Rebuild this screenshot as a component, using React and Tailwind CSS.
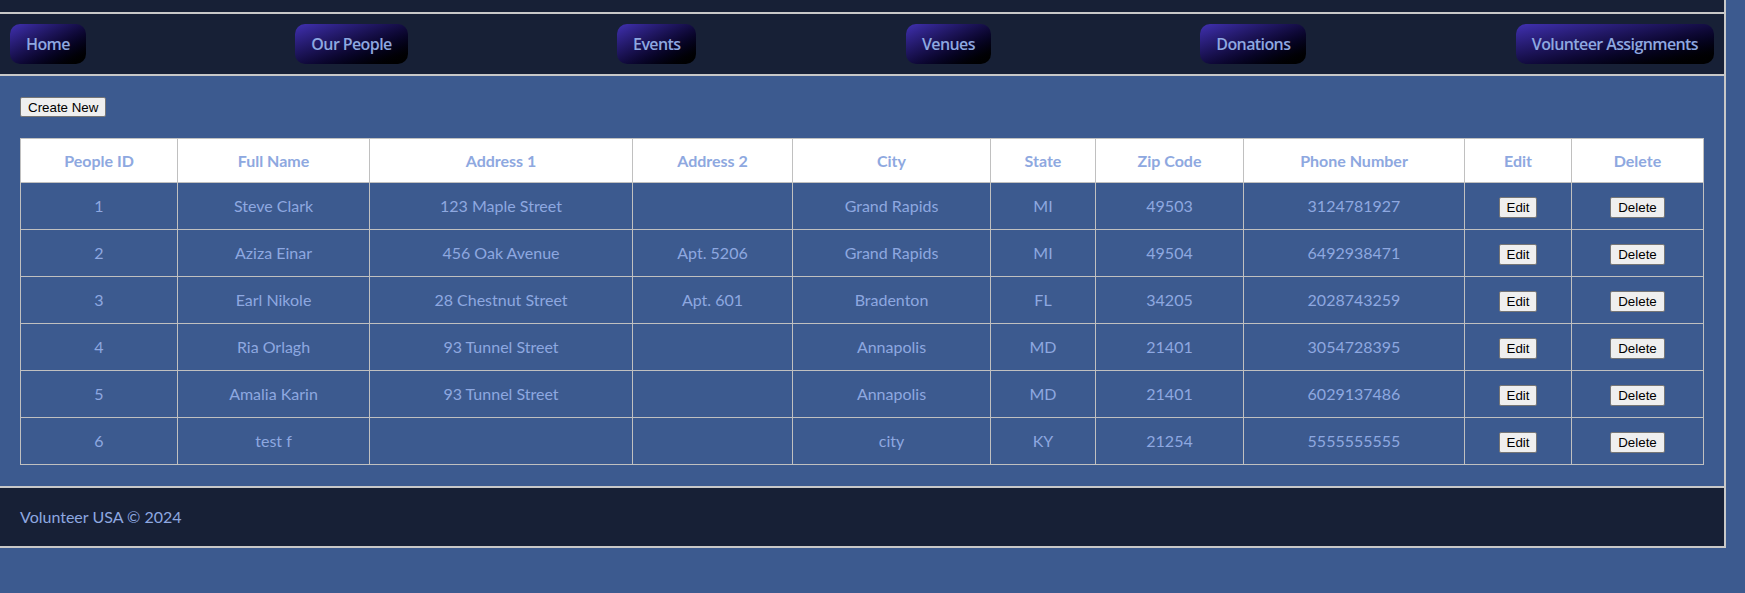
import React from "react";

const navItems = ["Home", "Our People", "Events", "Venues", "Donations", "Volunteer Assignments"];

const rows = [
  ["1", "Steve Clark", "123 Maple Street", "", "Grand Rapids", "MI", "49503", "3124781927"],
  ["2", "Aziza Einar", "456 Oak Avenue", "Apt. 5206", "Grand Rapids", "MI", "49504", "6492938471"],
  ["3", "Earl Nikole", "28 Chestnut Street", "Apt. 601", "Bradenton", "FL", "34205", "2028743259"],
  ["4", "Ria Orlagh", "93 Tunnel Street", "", "Annapolis", "MD", "21401", "3054728395"],
  ["5", "Amalia Karin", "93 Tunnel Street", "", "Annapolis", "MD", "21401", "6029137486"],
  ["6", "test f", "", "", "city", "KY", "21254", "5555555555"],
];

const headers = [
  ["People ID", "w-[157px]"],
  ["Full Name", "w-[192px]"],
  ["Address 1", "w-[263px]"],
  ["Address 2", "w-[160px]"],
  ["City", "w-[198px]"],
  ["State", "w-[105px]"],
  ["Zip Code", "w-[148px]"],
  ["Phone Number", "w-[221px]"],
  ["Edit", "w-[107px]"],
  ["Delete", "w-[132px]"],
];

function DefaultButton({ children }) {
  return (
    <button className="bg-[#efefef] border border-[#767676] rounded-[2px] px-[7px] py-[1px] text-black text-[13.33px] leading-[17px] font-['Liberation_Sans',Arial,sans-serif]">
      {children}
    </button>
  );
}

export default function App() {
  return (
    <div className="min-h-[593px] bg-[#3c5a8f] font-['Lato',sans-serif]">
      <div className="w-[1726px] border-r-2 border-b-2 border-[#c8c8c8]">
        <div className="h-[12px] bg-[#172036]" />
        <nav className="bg-[#172036] border-t-2 border-b-2 border-[#c8c8c8] h-[64px] flex items-center justify-between px-[10px]">
          {navItems.map((item) => (
            <a
              key={item}
              className="h-[40px] flex items-center px-[16px] rounded-[10px] bg-gradient-to-br from-[#4131b2] to-[#000000] text-[#8ea8e0] text-[16px] font-semibold font-['Open_Sans',sans-serif] tracking-[-0.6px]"
            >
              {item}
            </a>
          ))}
        </nav>
        <main className="bg-[#3c5a8f] px-[20px] pt-[21px] pb-[21px]">
          <div className="h-[20px] flex">
            <DefaultButton>Create New</DefaultButton>
          </div>
          <table className="mt-[21px] w-[1684px] table-fixed border-collapse text-[16px] text-[#8ea8e0]">
            <thead>
              <tr className="h-[44px] bg-white">
                {headers.map(([h, w]) => (
                  <th key={h} className={`${w} border border-[#c0c0c0] font-bold text-center p-0`}>
                    {h}
                  </th>
                ))}
              </tr>
            </thead>
            <tbody>
              {rows.map((r) => (
                <tr key={r[0]} className="h-[47px]">
                  {r.map((c, i) => (
                    <td key={i} className="border border-[#c0c0c0] text-center p-0">
                      {c}
                    </td>
                  ))}
                  <td className="border border-[#c0c0c0] text-center p-0">
                    <DefaultButton>Edit</DefaultButton>
                  </td>
                  <td className="border border-[#c0c0c0] text-center p-0">
                    <DefaultButton>Delete</DefaultButton>
                  </td>
                </tr>
              ))}
            </tbody>
          </table>
        </main>
        <footer className="bg-[#172036] border-t-2 border-[#c8c8c8] h-[60px] flex items-center px-[20px] text-[#8ea8e0] text-[16px]">
          Volunteer USA © 2024
        </footer>
      </div>
    </div>
  );
}
